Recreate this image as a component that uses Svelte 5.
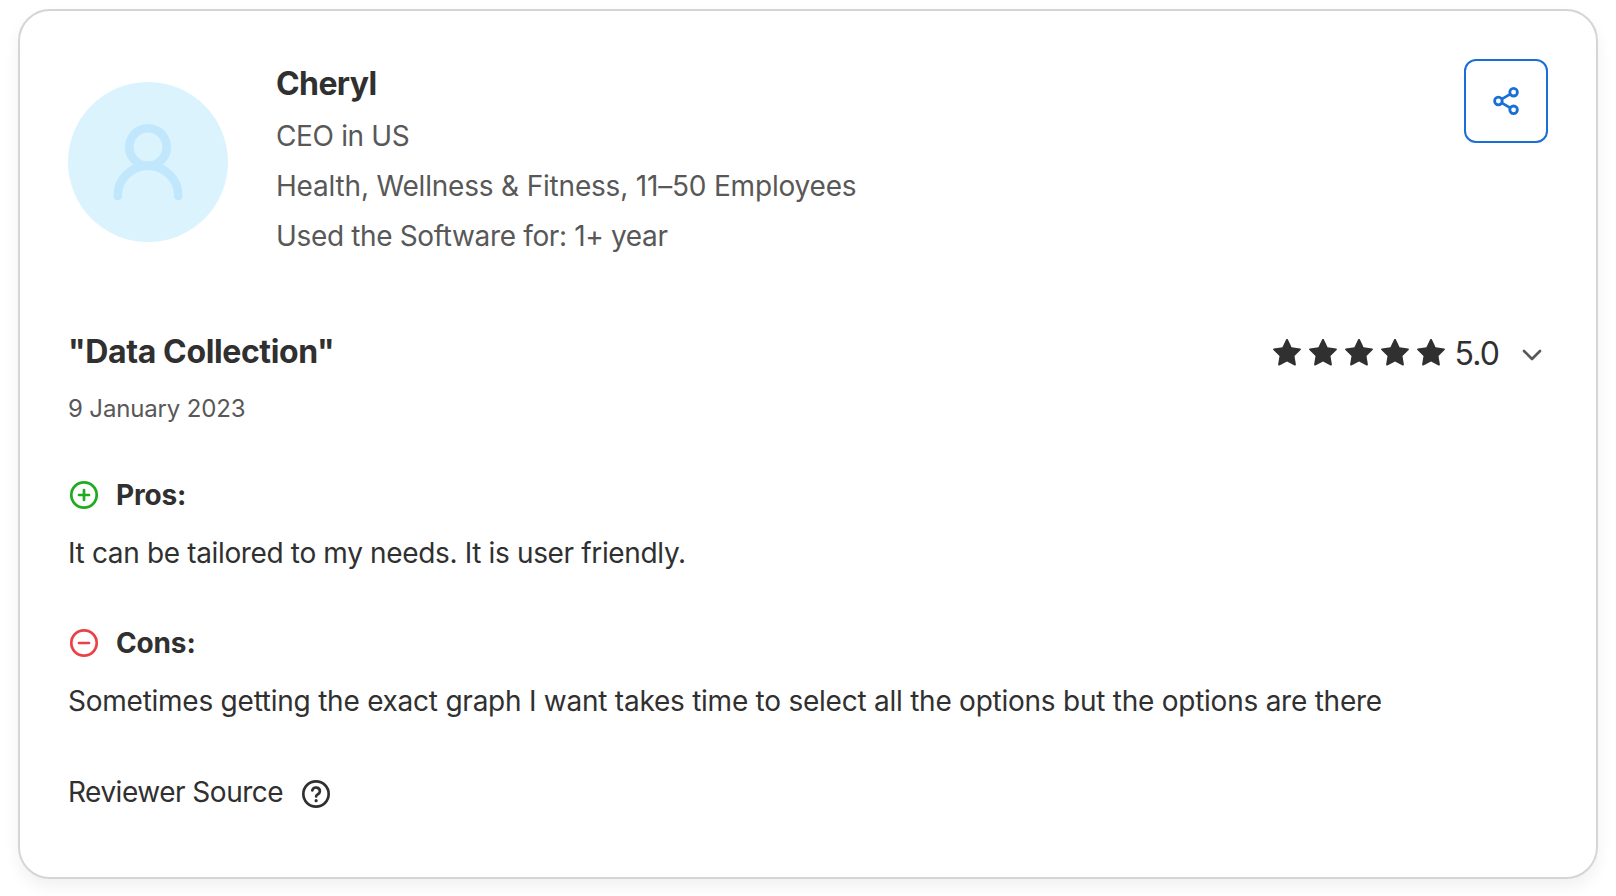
<script>
    let reviewer = {
        name: 'Cheryl',
        role: 'CEO in US',
        company: 'Health, Wellness & Fitness, 11–50 Employees',
        usage: 'Used the Software for: 1+ year'
    };
    let title = '"Data Collection"';
    let date = '9 January 2023';
    let rating = 5;
    let pros = 'It can be tailored to my needs. It is user friendly.';
    let cons = 'Sometimes getting the exact graph I want takes time to select all the options but the options are there';
</script>

<style>
    :global(body) {
        background-color: #fff;
    }

    main {
        box-sizing: border-box;
        height: 896px;
        padding: 9px 18px 17px;
        overflow: hidden;
    }

    .card {
        box-sizing: border-box;
        height: 870px;
        padding: 48px;
        border: 2px solid #d5d5d5;
        border-radius: 32px;
        background-color: #fff;
        box-shadow: 0 8px 16px rgba(0, 0, 0, 0.06);
        color: #303030;
        font-family: Inter, "Liberation Sans", sans-serif;
        font-size: 28px;
    }

    svg {
        display: block;
        flex: none;
    }

    h2, h3, h4, p {
        margin: 0;
        white-space: nowrap;
    }

    header {
        display: flex;
        align-items: flex-start;
        height: 206px;
    }

    .avatar {
        align-self: center;
        margin-right: 48px;
    }

    .info {
        flex: 1;
        padding-top: 1px;
        color: #585858;
        line-height: 50px;
    }

    .info h2 {
        margin-bottom: 3px;
        color: #303030;
        font-size: 32px;
        font-weight: 650;
        line-height: 48px;
        letter-spacing: -0.6px;
    }

    .role, .usage {
        letter-spacing: -0.35px;
    }

    .company {
        letter-spacing: -0.19px;
    }

    .share {
        display: flex;
        align-items: center;
        justify-content: center;
        box-sizing: border-box;
        width: 84px;
        height: 84px;
        padding: 0;
        border: 2px solid #1a6fd6;
        border-radius: 12px;
        background-color: #fff;
    }

    .headline {
        display: flex;
        justify-content: space-between;
        align-items: center;
        height: 48px;
        margin-top: 63px;
    }

    .headline h3 {
        font-size: 32px;
        font-weight: 650;
        line-height: 48px;
        letter-spacing: -0.38px;
    }

    .rating {
        display: flex;
        align-items: center;
        gap: 8px;
        padding: 2px 6px 0 0;
        font-size: 32px;
    }

    .rating span {
        margin: 0 15px 0 2px;
        letter-spacing: -0.9px;
    }

    .chevron {
        margin-top: 4px;
    }

    .date {
        margin-top: 15px;
        color: #585858;
        font-size: 24px;
        line-height: 36px;
        letter-spacing: -0.15px;
    }

    .label {
        display: flex;
        align-items: center;
        gap: 16px;
        height: 40px;
        margin-top: 48px;
    }

    .label h4 {
        font-size: 28px;
        font-weight: 650;
        letter-spacing: -0.15px;
    }

    .text {
        margin-top: 16px;
        line-height: 44px;
    }

    .pros-text {
        letter-spacing: -0.35px;
    }

    .cons-text {
        letter-spacing: -0.243px;
    }

    .source {
        display: flex;
        align-items: center;
        gap: 17px;
        margin-top: 47px;
        line-height: 44px;
        letter-spacing: -0.5px;
    }

    .source svg {
        margin-top: 4px;
    }
</style>

<main>
    <article class="card">
        <header>
            <svg class="avatar" width="160" height="160" viewBox="0 0 160 160" fill="none">
                <circle cx="80" cy="80" r="80" fill="#daf3fd"/>
                <g stroke="#c0e7fb" stroke-width="8.6" stroke-linecap="round">
                    <circle cx="80" cy="65" r="18.7"/>
                    <path d="M49.7 114a30.3 30.3 0 0 1 60.6 0"/>
                </g>
            </svg>
            <div class="info">
                <h2>{reviewer.name}</h2>
                <p class="role">{reviewer.role}</p>
                <p class="company">{reviewer.company}</p>
                <p class="usage">{reviewer.usage}</p>
            </div>
            <button class="share" aria-label="Share">
                <svg width="32" height="32" viewBox="0 0 32 32" fill="none" stroke="#1a6fd6" stroke-width="2.8">
                    <circle cx="8.4" cy="16" r="3.8"/>
                    <circle cx="23.6" cy="7.2" r="3.8"/>
                    <circle cx="23.6" cy="24.8" r="3.8"/>
                    <path d="M11.7 14.1l8.6-5M11.7 17.9l8.6 5"/>
                </svg>
            </button>
        </header>

        <div class="headline">
            <h3>{title}</h3>
            <div class="rating">
                {#each Array(rating) as _}
                    <svg width="28" height="28" viewBox="0 0.7 28 28" fill="#303030">
                        <path d="M13.1 1.2q.9-1.5 1.8 0l3.7 7.8 8.5 1.2q1.4.4.5 1.5l-6.1 6 1.4 8.5q0 1.3-1.3.9L14 23.2l-7.6 3.9q-1.3.4-1.3-.9l1.4-8.5-6.1-6q-.9-1.1.5-1.5L9.4 9z"/>
                    </svg>
                {/each}
                <span>{rating.toFixed(1)}</span>
                <svg class="chevron" width="20" height="12" viewBox="0 0 20 12" fill="none" stroke="#585858" stroke-width="2.6" stroke-linecap="round" stroke-linejoin="round">
                    <path d="M2 2l8 8 8-8"/>
                </svg>
            </div>
        </div>
        <p class="date">{date}</p>

        <div class="label">
            <svg width="32" height="32" viewBox="0 0 32 32" fill="none" stroke="#1fab1f" stroke-width="2.7" stroke-linecap="round">
                <circle cx="16" cy="16" r="12.7"/>
                <path d="M11 16h10M16 11v10"/>
            </svg>
            <h4>Pros:</h4>
        </div>
        <p class="text pros-text">{pros}</p>

        <div class="label">
            <svg width="32" height="32" viewBox="0 0 32 32" fill="none" stroke="#ea4147" stroke-width="2.7" stroke-linecap="round">
                <circle cx="16" cy="16" r="12.7"/>
                <path d="M11 16h10"/>
            </svg>
            <h4>Cons:</h4>
        </div>
        <p class="text cons-text">{cons}</p>

        <div class="source">
            <span>Reviewer Source</span>
            <svg width="32" height="32" viewBox="0 0 24 24" fill="none" stroke="#303030" stroke-width="2" stroke-linecap="round" stroke-linejoin="round">
                <circle cx="12" cy="12" r="9.5"/>
                <path d="M9.2 9.3a2.9 2.9 0 0 1 5.7.9c0 1.9-2.8 2.2-2.8 3.6"/>
                <circle cx="12.1" cy="17" r="1.2" fill="#303030" stroke="none"/>
            </svg>
        </div>
    </article>
</main>
